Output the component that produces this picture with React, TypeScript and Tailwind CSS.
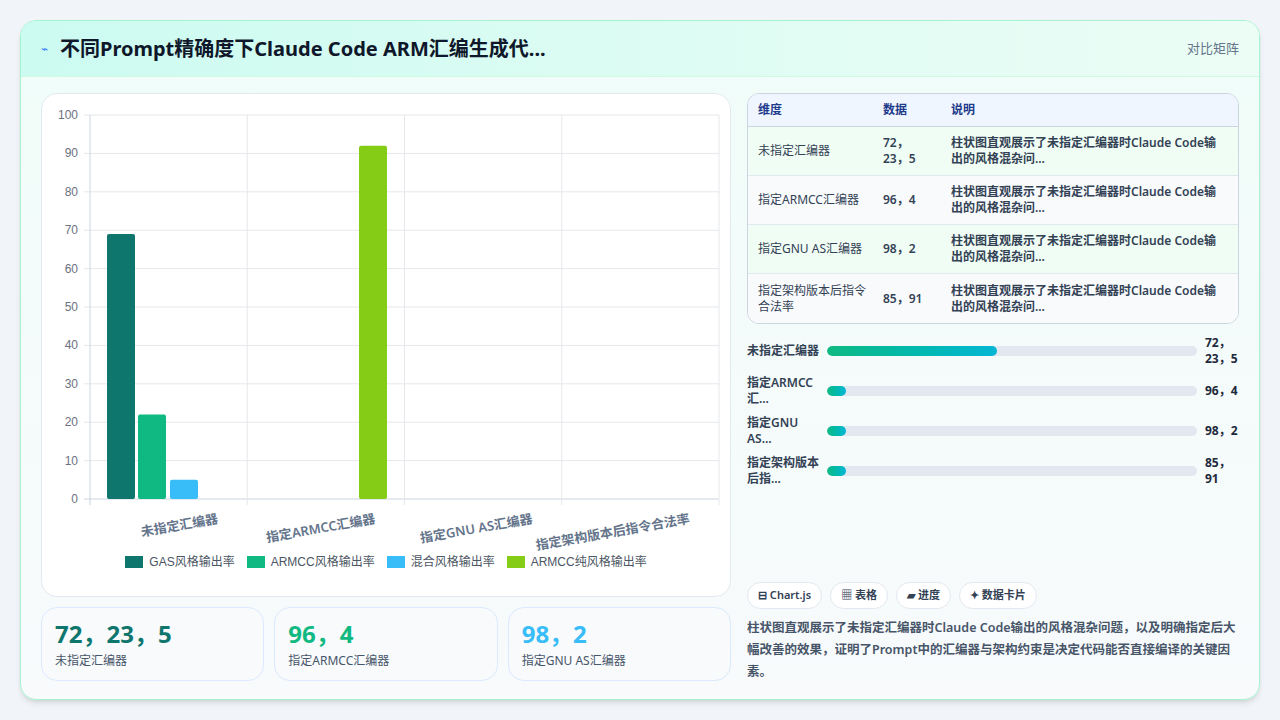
import React from "react"

const font = { fontFamily: '"Noto Sans", "Noto Sans CJK SC", sans-serif' }

const rows = [
  { dim: "未指定汇编器", data: "72，\n23，5", short: "未指定汇编器", pct: 46 },
  { dim: "指定ARMCC汇编器", data: "96，4", short: "指定ARMCC\n汇...", pct: 5 },
  { dim: "指定GNU AS汇编器", data: "98，2", short: "指定GNU\nAS...", pct: 5 },
  { dim: "指定架构版本后指令合法率", data: "85，91", short: "指定架构版本\n后指...", pct: 5 },
]

const desc = "柱状图直观展示了未指定汇编器时Claude Code输出的风格混杂问..."

function Chart() {
  const x0 = 48, x1 = 677, yTop = 17, yBot = 401
  const sy = (v: number) => yBot - (v / 100) * (yBot - yTop)
  const gw = (x1 - x0) / 4
  const bars = [
    { x: 65, v: 69, c: "#0f766e" },
    { x: 96, v: 22, c: "#10b981" },
    { x: 128, v: 5, c: "#38bdf8" },
    { x: 317, v: 92, c: "#84cc16" },
  ]
  const labels = ["未指定汇编器", "指定ARMCC汇编器", "指定GNU AS汇编器", "指定架构版本后指令合法率"]
  return (
    <svg width="688" height="455" className="block">
      {[0, 10, 20, 30, 40, 50, 60, 70, 80, 90, 100].map((v) => (
        <g key={v}>
          <line x1={x0 - 6} x2={x1} y1={sy(v)} y2={sy(v)} stroke={v === 0 ? "#cbd5e1" : "#e5e7eb"} />
          <text x={x0 - 12} y={sy(v) + 4} textAnchor="end" fontSize="12" fill="#6b7280" fontFamily="Liberation Sans, sans-serif">{v}</text>
        </g>
      ))}
      {[0, 1, 2, 3, 4].map((i) => (
        <line key={i} x1={x0 + gw * i} x2={x0 + gw * i} y1={yTop} y2={yBot + 6} stroke={i === 0 ? "#cbd5e1" : "#e5e7eb"} />
      ))}
      {bars.map((b, i) => (
        <rect key={i} x={b.x} y={sy(b.v)} width="28" height={yBot - sy(b.v)} rx="2" fill={b.c} />
      ))}
      {labels.map((l, i) => {
        const ax = x0 + gw * i + gw / 2 + 50
        const ay = yBot + 24
        return (
          <text key={l} x={ax} y={ay} textAnchor="end" fontSize="13" fontWeight="600" fill="#64748b"
            transform={`rotate(-10 ${ax} ${ay})`} style={font}>{l}</text>
        )
      })}
    </svg>
  )
}

export default function App() {
  return (
    <div className="w-[1280px] h-[720px] bg-[#f1f5f9] p-5 overflow-hidden" style={font}>
      <div className="h-[680px] rounded-2xl border border-[#a7f3d0] bg-gradient-to-b from-[#f0fdf9] to-[#f8fafc] shadow-md overflow-hidden flex flex-col">
        <div className="h-[56px] shrink-0 flex items-center justify-between px-5 bg-gradient-to-r from-[#ccfbf1] to-[#ecfdf5] border-b border-[#d1fae5]">
          <div className="flex items-center gap-3">
            <span className="text-[#3b82f6] text-xs">⌁</span>
            <h1 className="text-[20px] font-bold text-[#0f172a]">不同Prompt精确度下Claude Code ARM汇编生成代...</h1>
          </div>
          <span className="text-[13px] text-[#64748b]">对比矩阵</span>
        </div>
        <div className="flex-1 flex gap-4 px-5 pt-4 pb-4">
          <div className="w-[690px] flex flex-col gap-[10px]">
            <div className="h-[504px] bg-white rounded-2xl border border-[#e2e8f0] pt-1 flex flex-col">
              <Chart />
              <div className="flex justify-center gap-3 text-[12px] text-[#4b5563]" style={{ fontFamily: '"Liberation Sans", "Noto Sans CJK SC", sans-serif' }}>
                {[["#0f766e", "GAS风格输出率"], ["#10b981", "ARMCC风格输出率"], ["#38bdf8", "混合风格输出率"], ["#84cc16", "ARMCC纯风格输出率"]].map(([c, t]) => (
                  <div key={t} className="flex items-center gap-[6px]">
                    <span className="w-[18px] h-[12px] inline-block" style={{ background: c }} />
                    {t}
                  </div>
                ))}
              </div>
            </div>
            <div className="grid grid-cols-3 gap-[10px]">
              {[["72，23，5", "未指定汇编器", "text-[#0f766e]"], ["96，4", "指定ARMCC汇编器", "text-[#10b981]"], ["98，2", "指定GNU AS汇编器", "text-[#38bdf8]"]].map(([n, l, c]) => (
                <div key={l} className="h-[74px] bg-[#f8fafc] rounded-2xl border border-[#dbeafe] px-[13px] pt-[10px]">
                  <div className={`text-[24px] font-bold leading-8 ${c}`}>{n}</div>
                  <div className="text-[12px] text-[#475569] mt-[2px]">{l}</div>
                </div>
              ))}
            </div>
          </div>
          <div className="flex-1 flex flex-col">
            <div className="rounded-xl border border-[#cbd5e1] overflow-hidden bg-[#f8fafc]">
              <div className="flex h-[33px] items-center bg-[#eff6ff] border-b border-[#cbd5e1] text-[12px] font-bold text-[#1e3a8a]">
                <div className="w-[135px] pl-[10px]">维度</div>
                <div className="w-[68px]">数据</div>
                <div className="flex-1">说明</div>
              </div>
              {rows.map((r, i) => (
                <div key={i} className={`flex h-[49px] items-center text-[12px] text-[#334155] ${i < 3 ? "border-b border-[#e2e8f0]" : ""} ${i % 2 === 0 ? "bg-[#f0fdf4]" : "bg-[#f8fafc]"}`}>
                  <div className="w-[135px] pl-[10px] pr-2 leading-4">{r.dim}</div>
                  <div className="w-[68px] font-semibold whitespace-pre-line leading-4">{r.data}</div>
                  <div className="flex-1 font-semibold leading-4 pr-4">{desc}</div>
                </div>
              ))}
            </div>
            <div className="flex flex-col gap-[10px] mt-[12px]">
              {rows.map((r, i) => (
                <div key={i} className="flex items-center gap-2 h-[30px]">
                  <div className="w-[72px] text-[12px] font-semibold text-[#334155] whitespace-pre-line leading-4">{r.short}</div>
                  <div className="flex-1 h-[10px] bg-[#e2e8f0] rounded-full overflow-hidden">
                    <div className="h-full rounded-full bg-gradient-to-r from-[#10b981] to-[#06b6d4]" style={{ width: `${r.pct}%` }} />
                  </div>
                  <div className="w-[34px] text-[12px] font-bold text-[#1e293b] whitespace-pre-line leading-4">{r.data.replace("\n", "")}</div>
                </div>
              ))}
            </div>
            <div className="flex-1" />
            <div className="flex gap-2 mb-2">
              {["⊟ Chart.js", "▦ 表格", "▰ 进度", "✦ 数据卡片"].map((t) => (
                <span key={t} className="px-[10px] h-[27px] flex items-center rounded-full border border-[#e2e8f0] bg-white text-[11px] font-semibold text-[#334155]">{t}</span>
              ))}
            </div>
            <p className="text-[12.5px] font-semibold leading-[22px] text-[#475569]">柱状图直观展示了未指定汇编器时Claude Code输出的风格混杂问题，以及明确指定后大幅改善的效果，证明了Prompt中的汇编器与架构约束是决定代码能否直接编译的关键因素。</p>
          </div>
        </div>
      </div>
    </div>
  )
}
